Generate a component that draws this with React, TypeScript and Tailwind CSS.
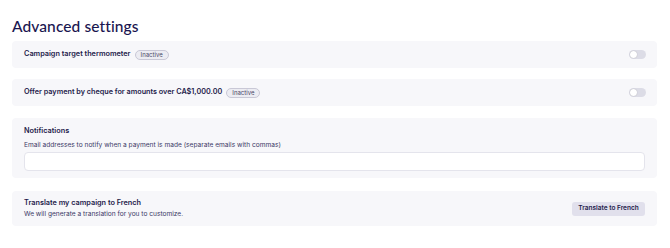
import React from "react";

function Toggle() {
  return (
    <div className="w-[17px] h-[9px] rounded-full bg-[#dcdce6] flex items-center p-[1px]">
      <div className="w-[7px] h-[7px] rounded-full bg-white shadow-[0_0_1px_rgba(0,0,0,0.3)]" />
    </div>
  );
}

function Badge() {
  return (
    <span className="inline-flex items-center h-[10px] px-[5px] rounded-full border border-[#c9c8d6] bg-[#ececf2] text-[6px] text-[#4a4866] leading-none">
      Inactive
    </span>
  );
}

export default function App() {
  return (
    <div
      className="w-[670px] h-[248px] bg-white pl-[12px] pr-[13px] pt-[16px] text-[#1e1b4b]"
      style={{ fontFamily: "Inter, 'Liberation Sans', sans-serif" }}
    >
      <h1
        className="text-[15.5px] leading-[20px] font-medium text-[#1a1650] mb-[5px] tracking-[0.1px]"
        style={{ fontFamily: "Lato, 'Noto Sans', sans-serif" }}
      >
        Advanced settings
      </h1>
      <div className="flex flex-col">
        <div className="h-[27px] rounded-[4px] bg-[#f7f7fa] px-[12px] flex items-center justify-between">
          <div className="flex items-center gap-[4px]">
            <span className="text-[7.3px] font-semibold">Campaign target thermometer</span>
            <Badge />
          </div>
          <div className="mr-[-1px]"><Toggle /></div>
        </div>
        <div className="mt-[11px] h-[27px] rounded-[4px] bg-[#f7f7fa] px-[12px] flex items-center justify-between">
          <div className="flex items-center gap-[4px]">
            <span className="text-[7.25px] font-semibold">Offer payment by cheque for amounts over CA$1,000.00</span>
            <Badge />
          </div>
          <div className="mr-[-1px]"><Toggle /></div>
        </div>
        <div className="mt-[12px] h-[60px] rounded-[4px] bg-[#f7f7fa] px-[12px] pt-[8px] flex flex-col">
          <span className="text-[7.3px] font-semibold leading-[10px]">Notifications</span>
          <span className="text-[6.6px] leading-[9px] mt-[5px] text-[#3b3866]">
            Email addresses to notify when a payment is made (separate emails with commas)
          </span>
          <div className="mt-[2px] h-[19px] rounded-[4px] bg-white border border-[#e4e4ec]" />
        </div>
        <div className="mt-[13px] h-[35px] rounded-[4px] bg-[#f7f7fa] px-[12px] flex items-center justify-between">
          <div className="flex flex-col">
            <span className="text-[7.3px] font-semibold leading-[10px]">Translate my campaign to French</span>
            <span className="text-[6.6px] leading-[9px] mt-[2px] text-[#3b3866]">
              We will generate a translation for you to customize.
            </span>
          </div>
          <button className="h-[14px] w-[73px] rounded-[3px] bg-[#e1e0ec] text-[6.5px] font-semibold text-[#1e1b4b] flex items-center justify-center">
            Translate to French
          </button>
        </div>
      </div>
    </div>
  );
}
